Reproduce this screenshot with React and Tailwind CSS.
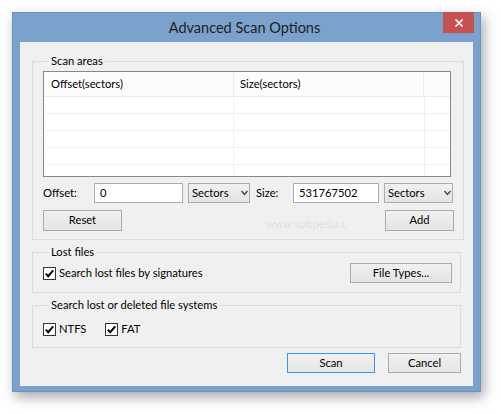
import React from 'react';

const FONT = { fontFamily: 'Lato, "Segoe UI", "Noto Sans", sans-serif' };

function Check({ label, className = '' }) {
  return (
    <label className={`flex items-center h-4 ${className}`}>
      <svg width="13" height="13" viewBox="0 0 13 13" className="shrink-0">
        <rect x="0.5" y="0.5" width="12" height="12" fill="#fff" stroke="#333" />
        <path d="M2.8 6.6 L5.2 9.2 L10.2 3.4" fill="none" stroke="#000" strokeWidth="2" />
      </svg>
      <span className="ml-[3px]">{label}</span>
    </label>
  );
}

function Btn({ children, className = '' }) {
  return (
    <button
      className={`flex items-center justify-center border border-[#acacac] bg-gradient-to-b from-[#f0f0f0] to-[#e5e5e5] text-black ${className}`}
    >
      {children}
    </button>
  );
}

function Select({ className = '' }) {
  return (
    <div
      className={`relative flex items-center h-5 border border-[#acacac] bg-gradient-to-b from-[#f0f0f0] to-[#e5e5e5] pl-[3px] ${className}`}
    >
      <span>Sectors</span>
      <svg width="7" height="6" viewBox="0 0 7 6" className="absolute right-[1px] top-[6px]">
        <path d="M0.5 1 L3.5 4.5 L6.5 1" fill="none" stroke="#444" strokeWidth="1.4" />
      </svg>
    </div>
  );
}

function Group({ title, className = '', children }) {
  return (
    <fieldset className={`border border-[#dcdcdc] ${className}`}>
      <legend className="ml-[6px] px-[2px] leading-4">{title}</legend>
      {children}
    </fieldset>
  );
}

export default function App() {
  const rows = [0, 1, 2, 3, 4];
  return (
    <div className="relative w-[501px] h-[414px] bg-white pt-3 pl-3 text-[11.2px] text-black" style={FONT}>
      <div className="w-[469px] h-[380px] bg-[#7ba2cc] border border-[#6d92bb] shadow-[3px_5px_12px_rgba(0,0,0,0.35)] flex flex-col">
        {/* title bar */}
        <div className="relative h-[29px] flex items-center justify-center shrink-0">
          <span className="text-[14.5px] text-[#1e1e1e] mt-[1px] mr-[4px]">Advanced Scan Options</span>
          <div className="absolute right-[6px] top-[-1px] w-[31px] h-[21px] bg-[#c75050] flex items-center justify-center">
            <svg width="10" height="10" viewBox="0 0 10 10">
              <path d="M1.5 1.5 L8.5 8.5 M8.5 1.5 L1.5 8.5" stroke="#fff" strokeWidth="1.7" />
            </svg>
          </div>
        </div>

        {/* client area */}
        <div className="mx-[7px] w-[453px] h-[344px] bg-[#f0f0f0] flex flex-col">
          <div className="mx-3 mt-[11px] flex flex-col">
            <Group title="Scan areas" className="px-[10px] pt-[2px] pb-2">
              <div className="w-[408px] h-[106px] border border-[#828790] bg-white flex flex-col overflow-hidden">
                <div className="h-[25px] shrink-0 flex bg-[#fcfcfc] border-b border-[#e5edf7]">
                  <div className="w-[190px] border-r border-[#e5edf7] pl-[7px] flex items-center">Offset(sectors)</div>
                  <div className="w-[190px] border-r border-[#e5edf7] pl-[6px] flex items-center">Size(sectors)</div>
                  <div className="flex-1" />
                </div>
                {rows.map((r) => (
                  <div key={r} className="h-[17px] shrink-0 flex border-b border-[#efefef]">
                    <div className="w-[190px] border-r border-[#eef2f8]" />
                    <div className="w-[191px] border-r border-[#eef2f8]" />
                    <div className="flex-1" />
                  </div>
                ))}
              </div>

              <div className="mt-[6px] flex items-center h-5">
                <span className="w-[51px]">Offset:</span>
                <div className="w-[89px] h-5 border border-[#abadb3] bg-white pl-[5px] flex items-center">0</div>
                <Select className="ml-[5px] w-[62px]" />
                <span className="ml-[6px] w-[37px]">Size:</span>
                <div className="w-[86px] h-5 border border-[#abadb3] bg-white pl-[5px] flex items-center">531767502</div>
                <Select className="ml-[5px] w-[69px]" />
              </div>

              <div className="mt-[7px] flex justify-between mr-[-1px]">
                <Btn className="w-[79px] h-[21px]">Reset</Btn>
                <Btn className="w-[69px] h-[21px]">Add</Btn>
              </div>
            </Group>

            <Group title="Lost files" className="mt-1 pl-[10px] pr-[9px] pt-[3px] pb-[9px]">
              <div className="flex items-center justify-between">
                <Check label="Search lost files by signatures" />
                <Btn className="w-[102px] h-5 mr-[-1px]">File Types...</Btn>
              </div>
            </Group>

            <Group title="Search lost or deleted file systems" className="mt-1 px-[10px] pt-2 pb-[10px]">
              <div className="flex items-center">
                <Check label="NTFS" />
                <Check label="FAT" className="ml-[19px]" />
              </div>
            </Group>

            <div className="mt-[5px] flex justify-end gap-[13px]">
              <Btn className="w-[88px] h-5 !border-[#3399ff]">Scan</Btn>
              <Btn className="w-[73px] h-5">Cancel</Btn>
            </div>
          </div>
        </div>
      </div>

      {/* watermark */}
      <div className="absolute left-[266px] top-[216px] text-[11px] text-black/[0.1] pointer-events-none">www.softpedia.c</div>
    </div>
  );
}
